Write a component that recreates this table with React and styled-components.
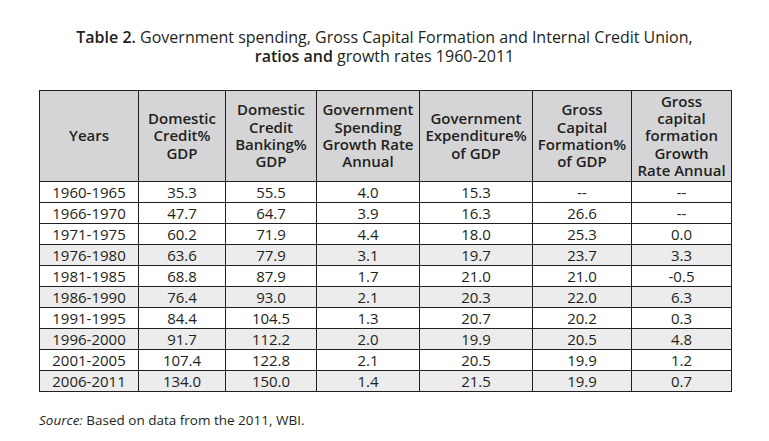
import React from 'react';
import styled, { createGlobalStyle } from 'styled-components';

const GlobalStyle = createGlobalStyle`
  html, body {
    margin: 0;
    padding: 0;
    background: #fff;
  }
  body {
    font-family: 'Open Sans', 'Noto Sans', sans-serif;
    color: #231f20;
  }
`;

const columns = [
  { label: ['Years'], width: 99 },
  { label: ['Domestic', 'Credit%', 'GDP'], width: 87 },
  { label: ['Domestic', 'Credit', 'Banking%', 'GDP'], width: 91 },
  { label: ['Government', 'Spending', 'Growth Rate', 'Annual'], width: 103 },
  { label: ['Government', 'Expenditure%', 'of GDP'], width: 113 },
  { label: ['Gross', 'Capital', 'Formation%', 'of GDP'], width: 99 },
  { label: ['Gross', 'capital', 'formation', 'Growth', 'Rate Annual'], width: 100 },
];

const rows = [
  ['1960-1965', '35.3', '55.5', '4.0', '15.3', '--', '--'],
  ['1966-1970', '47.7', '64.7', '3.9', '16.3', '26.6', '--'],
  ['1971-1975', '60.2', '71.9', '4.4', '18.0', '25.3', '0.0'],
  ['1976-1980', '63.6', '77.9', '3.1', '19.7', '23.7', '3.3'],
  ['1981-1985', '68.8', '87.9', '1.7', '21.0', '21.0', '-0.5'],
  ['1986-1990', '76.4', '93.0', '2.1', '20.3', '22.0', '6.3'],
  ['1991-1995', '84.4', '104.5', '1.3', '20.7', '20.2', '0.3'],
  ['1996-2000', '91.7', '112.2', '2.0', '19.9', '20.5', '4.8'],
  ['2001-2005', '107.4', '122.8', '2.1', '20.5', '19.9', '1.2'],
  ['2006-2011', '134.0', '150.0', '1.4', '21.5', '19.9', '0.7'],
];

// rows 4, 6, 8, 10 carry a light grey band
const isShaded = (i) => i >= 3 && i % 2 === 1;

export default function App() {
  return (
    <>
      <GlobalStyle />
      <Page>
        <Caption>
          <Line>
            <strong>Table 2.</strong> Government spending, Gross Capital Formation and Internal Credit Union,
          </Line>
          <Line>
            <strong>ratios and</strong> growth rates 1960-2011
          </Line>
        </Caption>
        <DataTable>
          <colgroup>
            {columns.map((c, i) => (
              <col key={i} style={{ width: c.width }} />
            ))}
          </colgroup>
          <thead>
            <tr>
              {columns.map((c, i) => (
                <HeadCell key={i}>
                  {c.label.map((line, j) => (
                    <HeadLine key={j}>{line}</HeadLine>
                  ))}
                </HeadCell>
              ))}
            </tr>
          </thead>
          <tbody>
            {rows.map((r, i) => (
              <Row key={r[0]} $shaded={isShaded(i)}>
                {r.map((v, j) => (
                  <Cell key={j}>{v}</Cell>
                ))}
              </Row>
            ))}
          </tbody>
        </DataTable>
        <Source>
          <em>Source:</em> Based on data from the 2011, WBI.
        </Source>
      </Page>
    </>
  );
}

const Page = styled.div`
  width: 769px;
  height: 441px;
  padding: 28px 0 0 39px;
  box-sizing: border-box;
`;

const Caption = styled.div`
  margin: 0 0 24px -39px;
  width: 769px;
  text-align: center;
  font-size: 16px;
  color: #231f20;
  strong {
    font-weight: 600;
  }
`;

const Line = styled.div`
  height: 19px;
  line-height: 19px;
  white-space: nowrap;
`;

const DataTable = styled.table`
  border-collapse: collapse;
  table-layout: fixed;
  width: 692px;
  border: 1px solid #231f20;
`;

const HeadCell = styled.th`
  height: 90px;
  padding: 0 2px;
  background: #d5d5d7;
  border: 1px solid #231f20;
  font-size: 15px;
  font-weight: 600;
  text-align: center;
  vertical-align: middle;
  color: #231f20;
  white-space: nowrap;
`;

const HeadLine = styled.div`
  height: 17.3px;
  line-height: 17.3px;
`;

const Row = styled.tr`
  background: ${(p) => (p.$shaded ? '#ececec' : '#fff')};
`;

const Cell = styled.td`
  height: 20px;
  padding: 0;
  border: 1px solid #231f20;
  font-size: 15px;
  line-height: 20px;
  text-align: center;
  color: #231f20;
`;

const Source = styled.p`
  margin: 19px 0 0;
  font-size: 13.5px;
  line-height: 18px;
  color: #231f20;
  em {
    font-style: italic;
  }
`;
